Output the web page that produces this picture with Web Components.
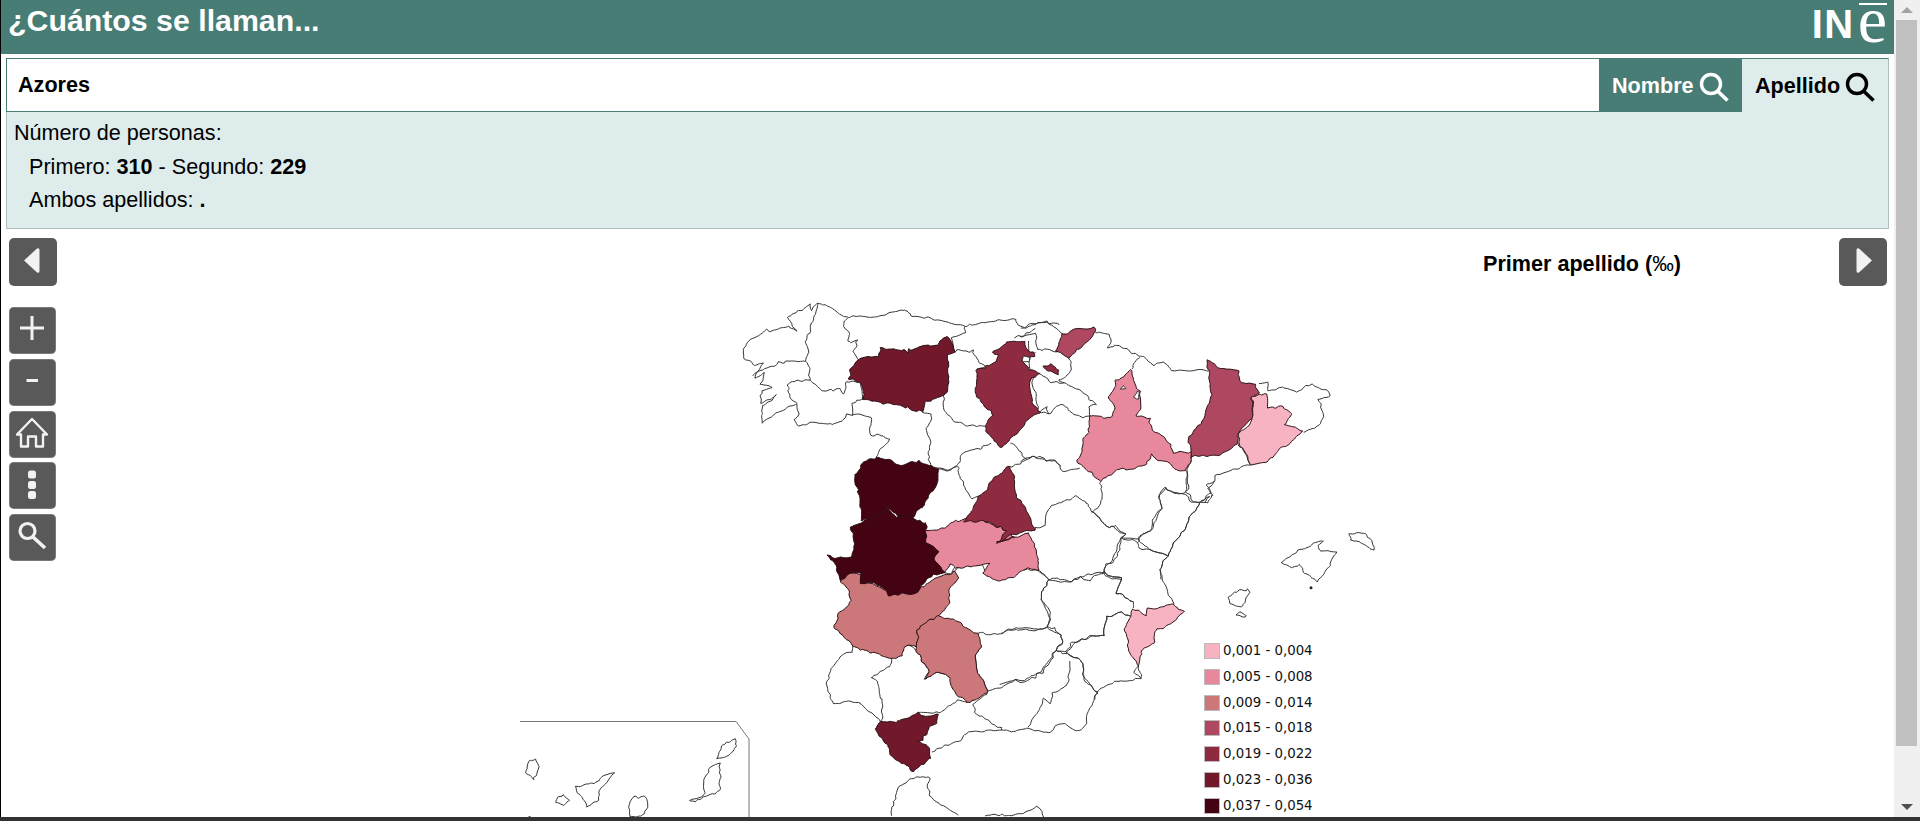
<!DOCTYPE html>
<html lang="es">
<head>
<meta charset="utf-8">
<title>¿Cuántos se llaman...</title>
<style>
  html, body { margin: 0; height: 821px; overflow: hidden; background: #fff; }
  body { font-family: "Liberation Sans", Arial, sans-serif; }
</style>
</head>
<body>
<ine-app>
  <app-header slot="top">¿Cuántos se llaman...</app-header>
  <search-panel slot="top" value="Azores" first="310" second="229" both="."></search-panel>
  <map-view slot="top"></map-view>
</ine-app>

<script>
const PATHS = {
  prev: '<path d="M15 22.5 L28 10.5 Q30.5 9.5 30.5 12 V33 Q30.5 35.5 28 34.5 Z" fill="#f2f2f2"/>',
  next: '<path d="M33 22.5 L20 10.5 Q17.5 9.5 17.5 12 V33 Q17.5 35.5 20 34.5 Z" fill="#f2f2f2"/>',
  plus: '<path d="M11 21 H35 M23 9 V33" stroke="#f2f2f2" stroke-width="3" fill="none"/>',
  minus: '<path d="M17.5 21.5 H29" stroke="#f2f2f2" stroke-width="3" fill="none"/>',
  home: '<path d="M8 23.5 L23 8 L38 23.5 H34 V35.5 H27 V25.5 H19 V35.5 H12 V23.5 Z" stroke="#f2f2f2" stroke-width="2.4" stroke-linejoin="round" fill="none"/>',
  dots: '<rect x="19" y="8.5" width="8" height="8" rx="2.5" fill="#f2f2f2"/><rect x="19" y="19" width="8" height="8" rx="2.5" fill="#f2f2f2"/><rect x="19" y="29" width="8" height="8" rx="2.5" fill="#f2f2f2"/>',
  search: '<circle cx="18.5" cy="17" r="7.5" stroke="#f2f2f2" stroke-width="3.2" fill="none"/><path d="M24 23 L36 34" stroke="#f2f2f2" stroke-width="3.6" fill="none"/>'
};

// map data, written in the pixel grid of the 3x crops of the map
const CROPS = {
  A: [720, 290], B: [1020, 300], C: [800, 540], E: [500, 700], F: [1000, 480], G: [780, 430]
};
const LINES = {
  A: [
    "130,397 128,345 165,312 125,335 125,300 150,292 122,285 135,255 105,265 130,220 105,232 75,200 72,178 88,155 135,118 145,128 205,105 225,120 210,85 268,40 275,55 295,35 330,50 360,78 430,78 495,72 550,60 575,78 620,80 680,98 735,108 800,100 835,92 885,88 895,102 930,112 955,100 1020,105",
    "130,397 165,365 225,347 238,370 225,390 235,407 280,395 320,405 365,395 378,375 392,380 420,378 450,385 458,430 490,437 505,450 470,505",
    "295,35 290,70 270,110 262,150 268,190 255,212 270,240 265,268",
    "100,260 130,240 165,225 210,220 255,212",
    "265,268 290,290 320,300 360,295 370,310 385,280 420,280 430,330 395,345 392,380",
    "205,282 235,268 265,268",
    "205,282 215,320 230,345",
    "388,80 368,110 385,130 395,160 415,150 410,170 395,185 415,205",
    "685,180 680,300 670,320 680,380 710,395 745,410 800,405",
    "735,108 735,130 695,150 705,180 720,175 760,180 780,215 795,225 775,240",
    "610,365 635,378 618,420 635,460 625,490 630,525 650,530 690,540 710,525 740,485 810,460",
    "710,530 735,590 755,625 780,620",
    "885,140 925,125 945,120",
    "875,455 890,470 915,505 870,530",
    "915,505 960,500 1000,515 1020,530",
    "655,535 680,540 710,530"
  ],
  B: [
    "0,78 50,72 80,68 130,100",
    "215,95 270,105 265,145 285,135 350,165 360,170 400,195 430,185 460,212 490,205 558,212",
    "715,250 740,250 745,275 790,262 830,275 880,255 920,265 925,285 900,300 915,350 890,385 850,400",
    "760,470 692,490 630,512 590,530 565,570 585,585 560,610 540,612 490,690 440,760 420,810 425,840",
    "0,105 45,100 55,145 105,152",
    "25,120 28,155 48,155 50,150 30,180 35,220 70,225 95,250 130,252 170,265 200,292 230,312 205,325 205,345",
    "35,220 40,230 55,335 85,340 110,322 130,318 165,345 190,355 205,345",
    "0,350 55,335 75,322 85,340",
    "150,170 150,205 130,235 118,240 130,252",
    "355,170 340,205",
    "515,478 500,515 503,570 495,575 520,605 540,612",
    "655,425 695,490",
    "500,515 495,575 470,580 440,570 415,595 425,625 405,660 385,690 350,720",
    "240,540 250,600 218,635 265,685 285,675 315,700 305,712 340,718 350,720 395,755 440,760",
    "0,480 15,470 60,475 100,480 130,515 180,505",
    "40,680 75,675 80,630 125,610 165,592 195,605 218,635",
    "300,715 255,800 250,820 300,840"
  ],
  F: [
    "600,72 540,165 500,220 480,270 495,320 520,375",
    "415,555 405,580 425,595 370,602 330,610 295,635 280,660",
    "275,95 325,145 335,140 375,160 360,175 350,230 315,250 315,275",
    "120,270 145,295 175,290 205,305 235,290 270,298 315,275",
    "360,175 400,185 410,190 425,210 460,215 495,220",
    "410,190 470,125 485,85 475,50 495,30 550,40 575,65 600,72",
    "600,72 640,40 620,20 645,0",
    "605,65 630,55 610,70",
    "315,275 360,295 350,340 395,365 395,390",
    "145,295 125,360 155,395 145,435 180,460 185,490 170,515 200,520 215,490 270,465 315,465 320,410 360,395 390,410",
    "145,435 100,455 60,450 30,455 0,455",
    "170,515 130,575 100,590 70,600 40,600 0,610",
    "200,522 245,550 250,600 295,635",
    "415,555 425,595"
  ],
  C: [
    "895,458 870,500 855,550 825,572 800,552 770,555 745,580 690,568 645,575 600,568 510,572 480,605 440,615 398,635",
    "240,545 215,515 180,495 145,487 97,492 80,430 110,365 120,350 155,340 160,315",
    "470,100 480,85 545,70 555,100 600,120 660,90 715,90 745,115 725,180 755,235 745,255",
    "745,115 800,125 870,105 915,95 960,115 950,160 995,185",
    "530,282 590,280 630,270 660,265 710,270 745,255 770,260 785,300 770,335 800,345 850,372 845,405 895,458",
    "545,320 530,350 535,400 565,450 600,440 640,420 660,425 710,415 740,370 770,335",
    "565,450 525,490 530,520 600,560 600,568",
    "810,368 800,430 760,460 750,490 730,475 705,530 690,565",
    "270,355 270,380 215,415 235,420 245,460 240,545",
    "325,318 355,330 385,400 375,415 415,400 435,405",
    "500,485 475,480 420,520 365,520",
    "270,830 300,735 365,710 390,715 380,735 395,770 470,830",
    "555,830 575,825 610,825 640,830 690,815 710,797 730,830",
    "800,345 830,300 880,285 915,285 920,230 960,215 990,230"
  ]
};
const ISLANDS = {
  F: [
    "845,247 900,205 945,185 970,180 955,195 965,215 1005,218 995,250 950,303 910,280 900,250 875,268 850,252",
    "1052,165 1095,158 1120,180 1125,205 1085,190 1055,182",
    "690,355 710,338 745,332 752,345 725,380 692,375",
    "715,408 725,395 745,410 730,413"
  ],
  E: [
    "655,172 665,140 710,110 715,130 700,155 665,175",
    "565,302 605,285 630,200 660,190 655,270 605,290 585,310",
    "397,292 440,295 445,335 420,350 385,345 380,320",
    "230,257 285,250 310,225 340,222 300,270 295,300 262,320 245,295",
    "170,295 186,282 205,298 190,316 172,308",
    "80,180 110,175 118,200 100,240 85,215",
    "80,352 88,345 96,352"
  ]
};
// painted in this order, over the plain borders
const PROVINCES = [
  ["G", "#e8889c", "438,305 500,295 530,270 600,270 680,300 700,325 650,335 745,310 780,385 778,420 750,415 655,455 610,430 622,402 600,402 560,412 530,420 510,405 498,430 465,390 470,370 438,340"],
  ["A", "#72182b", "385,270 390,240 415,205 470,200 480,175 525,175 565,190 570,180 650,165 685,140 705,180 685,190 685,240 683,300 670,318 618,330 610,365 570,350 500,345 430,330 430,300 420,280"],
  ["A", "#8f2b40", "860,155 915,150 925,180 945,178 950,195 925,200 910,210 930,240 965,252 935,265 935,330 958,365 910,400 900,420 870,450 845,470 810,445 800,405 825,375 790,350 765,295 775,240 825,215 830,195 815,185"],
  ["A", "#8f2b40", "968,228 990,222 1015,235 1010,250 985,243"],
  ["A", "#8f2b40", "870,528 890,560 890,610 925,665 940,720 880,730 830,760 860,720 800,695 730,700 765,650 780,620 810,590 820,565"],
  ["A", "#430312", "402,552 430,520 470,505 540,522 600,515 630,525 655,535 655,570 625,625 600,655 575,685 545,690 500,655 450,690 420,690 418,650 415,600"],
  ["C", "#cc7779", "120,125 135,100 150,100 180,105 185,130 240,140 270,160 330,155 385,130 440,105 470,100 475,120 450,150 450,190 430,215 350,270 355,320 320,320 300,350 265,355 225,340 160,315 110,265 120,220 150,180 150,150"],
  ["C", "#cc7779", "415,222 445,232 490,260 535,285 545,320 530,350 535,400 565,450 525,478 500,485 470,465 435,405 415,400 380,415 385,400 355,330 350,270"],
  ["G", "#430312", "137,382 210,380 228,340 210,285 270,270 320,235 350,265 385,260 440,280 438,340 470,370 465,390 498,430 440,445 410,485 330,492 300,465 240,460 240,430 205,430 180,450 165,400"],
  ["C", "#72182b", "245,542 305,548 360,520 370,530 410,525 415,550 390,560 365,605 350,605 385,625 395,650 345,695 310,670 270,640 255,610 230,570"],
  ["B", "#ad4860", "130,100 215,82 222,92 195,125 150,170 103,150"],
  ["B", "#e8889c", "335,205 340,240 350,265 360,275 360,320 350,345 385,360 400,395 440,420 460,460 515,455 515,480 495,515 465,510 395,465 380,490 330,505 290,510 240,540 165,480 180,450 205,400 205,345 270,355 280,325 270,300 285,245"],
  ["B", "#ad4860", "558,182 620,205 655,210 665,255 700,250 720,280 697,295 695,350 655,400 655,425 600,460 515,475 510,405 545,370 570,290 565,230"],
  ["B", "#f7b3c1", "700,290 745,285 745,320 790,320 810,345 790,375 850,395 775,445 760,475 695,490 660,425 660,395 690,375 697,330"],
  ["F", "#f7b3c1", "395,392 440,402 445,385 520,375 555,395 510,430 470,450 455,490 430,510 415,555 385,510 375,460"]
];
const HOLES = [
  ["A", "912,198 930,198 930,213 912,213"],
  ["B", "303,262 312,252 318,264"],
  ["B", "342,292 352,272 358,276 356,296"],
  ["G", "498,430 510,405 526,415 515,432"]
];
const LEGEND = [
  ["#f7b3c1", "0,001 - 0,004"], ["#e8889c", "0,005 - 0,008"], ["#cc7779", "0,009 - 0,014"],
  ["#ad4860", "0,015 - 0,018"], ["#8f2b40", "0,019 - 0,022"], ["#72182b", "0,023 - 0,036"],
  ["#430312", "0,037 - 0,054"]
];

// small bumps, a function of the place only, so that two shapes that share a border bump alike
const lattice = (i, j, s) => {
  const v = Math.sin(i * 127.1 + j * 311.7 + s * 74.7) * 43758.5453;
  return v - Math.floor(v) - 0.5;
};
const noise = (x, y, cell, s) => {
  const gx = x / cell, gy = y / cell;
  const i = Math.floor(gx), j = Math.floor(gy);
  const fade = t => t * t * (3 - 2 * t);
  const u = fade(gx - i), v = fade(gy - j);
  const top = lattice(i, j, s) * (1 - u) + lattice(i + 1, j, s) * u;
  const bottom = lattice(i, j + 1, s) * (1 - u) + lattice(i + 1, j + 1, s) * u;
  return top * (1 - v) + bottom * v;
};
const bump = (x, y) => [
  x + noise(x, y, 3.5, 1) * 2.6 + noise(x, y, 11, 2) * 4,
  y + noise(x, y, 3.5, 3) * 2.6 + noise(x, y, 11, 4) * 4
];
const roughen = (crop, points, closed) => {
  const [ox, oy] = CROPS[crop];
  const pts = points.split(" ").map(p => {
    const [x, y] = p.split(",").map(Number);
    return [ox + x / 3, oy + y / 3];
  });
  if (closed) pts.push(pts[0]);
  const out = [];
  pts.forEach((p, n) => {
    if (n === 0) {
      out.push(bump(p[0], p[1]));
      return;
    }
    const q = pts[n - 1];
    const steps = Math.max(1, Math.round(Math.hypot(p[0] - q[0], p[1] - q[1]) / 1.6));
    for (let k = 1; k <= steps; k++) {
      out.push(bump(q[0] + (p[0] - q[0]) * k / steps, q[1] + (p[1] - q[1]) * k / steps));
    }
  });
  return out.map(p => p[0].toFixed(1) + "," + p[1].toFixed(1)).join(" ");
};

const templateApp = document.createElement("template");
templateApp.innerHTML = `
  <style>
    :host { display: flex; width: 1920px; height: 821px; flex-direction: column; box-sizing: border-box; border-bottom: 4px solid #333; }
    .body { display: flex; flex: 1; min-height: 0; }
    .page { flex: 1; min-width: 0; display: flex; flex-direction: column; border-left: 1px solid #000; overflow: hidden; }
    page-scrollbar { flex: none; }
  </style>
  <div class="body">
    <div class="page"><slot name="top"></slot></div>
    <page-scrollbar></page-scrollbar>
  </div>
`;
class IneApp extends HTMLElement {
  constructor() {
    super();
    this.attachShadow({mode: "open"});
    this.shadowRoot.appendChild(templateApp.content.cloneNode(true));
  }
}

const templateScrollbar = document.createElement("template");
templateScrollbar.innerHTML = `
  <style>
    :host { display: flex; flex-direction: column; width: 26px; background: #f0f0f0; padding-left: 2px; padding-right: 3px; box-sizing: border-box; }
    .arrow { height: 20px; display: flex; align-items: center; justify-content: center; flex: none; }
    .thumb { height: 726px; background: #c0c0c0; flex: none; }
    .space { flex: 1; }
  </style>
  <div class="arrow"><svg width="12" height="6"><path d="M6 0 L12 6 H0 Z" fill="#a3a3a3"/></svg></div>
  <div class="thumb"></div>
  <div class="space"></div>
  <div class="arrow"><svg width="12" height="6"><path d="M0 0 H12 L6 6 Z" fill="#505050"/></svg></div>
`;
class PageScrollbar extends HTMLElement {
  constructor() {
    super();
    this.attachShadow({mode: "open"});
    this.shadowRoot.appendChild(templateScrollbar.content.cloneNode(true));
  }
}

const templateHeader = document.createElement("template");
templateHeader.innerHTML = `
  <style>
    :host { display: flex; flex: none; height: 54px; background: #477d75; color: #fff; justify-content: space-between; padding: 0 7px 0 7px; }
    .title { font: bold 30.3px/42px "Liberation Sans", Arial, sans-serif; }
    .logo { display: flex; position: relative; height: 54px; }
    .in { font: bold 40px/46px "Liberation Sans", Arial, sans-serif; padding-top: 1px; letter-spacing: 1.5px; }
    .e { font: 66px/40px "Liberation Serif", "Times New Roman", serif; margin-left: 3px; }
    .logo::after { content: ""; position: absolute; right: 0; top: 3px; width: 28px; height: 2px; background: #fff; }
  </style>
  <div class="title"><slot></slot></div>
  <div class="logo"><span class="in">IN</span><span class="e">e</span></div>
`;
class AppHeader extends HTMLElement {
  constructor() {
    super();
    this.attachShadow({mode: "open"});
    this.shadowRoot.appendChild(templateHeader.content.cloneNode(true));
  }
}

const templatePanel = document.createElement("template");
templatePanel.innerHTML = `
  <style>
    :host { display: block; flex: none; margin: 4px 5px 0 5px; font: 21.6px "Liberation Sans", Arial, sans-serif; color: #000; }
    .row { display: flex; height: 54px; box-sizing: border-box; border-top: 1px solid #477d75; border-left: 1px solid #477d75; border-right: 1px solid #aebfbd; background: #deedeb; }
    .query { flex: 1; background: #fff; font-weight: bold; padding-left: 11px; line-height: 52px; border-bottom: 1px solid #477d75; }
    .tab { display: flex; align-items: center; font-weight: bold; gap: 5px; box-sizing: border-box; }
    .tab svg { margin-top: 3px; }
    .name { width: 143px; background: #477d75; color: #fff; padding-left: 13px; }
    .surname { width: 146px; padding-left: 13px; }
    .info { height: 117px; box-sizing: border-box; background: #deedeb; border: 1px solid #aebfbd; border-top: 0; padding: 4px 7px; line-height: 33.6px; }
    .indent { padding-left: 15px; }
  </style>
  <div class="row">
    <div class="query"></div>
    <div class="tab name">Nombre <svg width="30" height="30" viewBox="0 0 30 30"><circle cx="12" cy="12" r="9.5" fill="none" stroke="#fff" stroke-width="3.4"/><path d="M18.5 19 L28.5 28.5" stroke="#fff" stroke-width="3.6"/></svg></div>
    <div class="tab surname">Apellido <svg width="30" height="30" viewBox="0 0 30 30"><circle cx="12" cy="12" r="9.5" fill="none" stroke="#000" stroke-width="3.4"/><path d="M18.5 19 L28.5 28.5" stroke="#000" stroke-width="3.6"/></svg></div>
  </div>
  <div class="info">
    <div>Número de personas:</div>
    <div class="indent">Primero: <b class="first"></b> - Segundo: <b class="second"></b></div>
    <div class="indent">Ambos apellidos: <b class="both"></b></div>
  </div>
`;
class SearchPanel extends HTMLElement {
  constructor() {
    super();
    this.attachShadow({mode: "open"});
    this.shadowRoot.appendChild(templatePanel.content.cloneNode(true));
  }

  connectedCallback() {
    this.shadowRoot.querySelector(".query").textContent = this.getAttribute("value");
    this.shadowRoot.querySelector(".first").textContent = this.getAttribute("first");
    this.shadowRoot.querySelector(".second").textContent = this.getAttribute("second");
    this.shadowRoot.querySelector(".both").textContent = this.getAttribute("both");
  }
}

const templateButton = document.createElement("template");
templateButton.innerHTML = `
  <style>
    :host { display: block; width: 47px; height: 47px; box-sizing: border-box; background: #595959; border-radius: 5px; box-shadow: 0 0 0 .5px #9a9a9a inset; }
    :host([big]) { width: 48px; height: 48px; box-shadow: none; }
    svg { display: block; }
  </style>
  <svg width="48" height="48" viewBox="0 0 48 48"></svg>
`;
class IconButton extends HTMLElement {
  constructor() {
    super();
    this.attachShadow({mode: "open"});
    this.shadowRoot.appendChild(templateButton.content.cloneNode(true));
  }

  connectedCallback() {
    this.shadowRoot.querySelector("svg").innerHTML = PATHS[this.getAttribute("icon")];
  }
}

const templateLegend = document.createElement("template");
templateLegend.innerHTML = `
  <style>
    :host { display: flex; flex-direction: column; position: absolute; left: 1203px; top: 414px; gap: 9.8px; font: 13.33px/16px "DejaVu Sans", Verdana, sans-serif; color: #111; }
    .item { display: flex; align-items: center; gap: 3px; height: 16px; }
    .swatch { width: 16px; height: 16px; box-sizing: border-box; border: 1px solid #bbb; }
  </style>
`;
class MapLegend extends HTMLElement {
  constructor() {
    super();
    this.attachShadow({mode: "open"});
    this.shadowRoot.appendChild(templateLegend.content.cloneNode(true));
  }

  connectedCallback() {
    LEGEND.forEach(([color, label]) => {
      const item = document.createElement("div");
      item.className = "item";
      item.innerHTML = `<span class="swatch" style="background:${color}"></span><span>${label}</span>`;
      this.shadowRoot.appendChild(item);
    });
  }
}

const templateMap = document.createElement("template");
templateMap.innerHTML = `
  <style>
    :host { display: block; flex: 1; min-height: 0; position: relative; overflow: hidden; }
    svg.map { position: absolute; left: -1px; top: 0; }
    .line, .island, .prov, .hole { stroke: #333; stroke-width: 1; stroke-linejoin: round; }
    .line { fill: none; }
    .frame { fill: none; stroke: #777; stroke-width: 1; }
    .island, .hole { fill: #fff; }
    .prov { stroke: #2a1015; }
    .top { display: flex; padding: 9px 7px 0 8px; }
    .title { margin-left: auto; margin-right: 158px; margin-top: 14px; font: bold 21.6px/24px "Liberation Sans", Arial, sans-serif; }
    .title span { font-weight: normal; }
    .tools { display: flex; flex-direction: column; gap: 4.8px; padding: 21px 0 0 8px; width: 47px; position: relative; }
    .top, .tools { position: relative; }
  </style>
  <svg class="map" width="1895" height="588" viewBox="0 229 1895 588">
    <g class="shapes"></g>
  </svg>
  <div class="top">
    <icon-button icon="prev" big></icon-button>
    <div class="title">Primer apellido (<span>‰</span>)</div>
    <icon-button icon="next" big></icon-button>
  </div>
  <div class="tools">
    <icon-button icon="plus"></icon-button>
    <icon-button icon="minus"></icon-button>
    <icon-button icon="home"></icon-button>
    <icon-button icon="dots"></icon-button>
    <icon-button icon="search"></icon-button>
  </div>
  <map-legend></map-legend>
`;
class MapView extends HTMLElement {
  constructor() {
    super();
    this.attachShadow({mode: "open"});
    this.shadowRoot.appendChild(templateMap.content.cloneNode(true));
  }

  connectedCallback() {
    let out = '<polyline class="frame" points="520,721.5 736,721.5 749,739 749,817"/>';
    Object.keys(LINES).forEach(crop => {
      LINES[crop].forEach(p => {
        out += `<polyline class="line" points="${roughen(crop, p, false)}"/>`;
      });
    });
    Object.keys(ISLANDS).forEach(crop => {
      ISLANDS[crop].forEach(p => {
        out += `<polygon class="island" points="${roughen(crop, p, true)}"/>`;
      });
    });
    PROVINCES.forEach(([crop, color, points]) => {
      out += `<polygon class="prov" fill="${color}" points="${roughen(crop, points, true)}"/>`;
    });
    HOLES.forEach(([crop, points]) => {
      out += `<polygon class="hole" points="${roughen(crop, points, true)}"/>`;
    });
    // the small isle south of Mallorca
    out += '<circle cx="1311" cy="587.7" r="1.5" fill="#222"/>';
    this.shadowRoot.querySelector(".shapes").innerHTML = out;
  }
}

window.customElements.define("ine-app", IneApp);
window.customElements.define("page-scrollbar", PageScrollbar);
window.customElements.define("app-header", AppHeader);
window.customElements.define("search-panel", SearchPanel);
window.customElements.define("icon-button", IconButton);
window.customElements.define("map-legend", MapLegend);
window.customElements.define("map-view", MapView);
</script>
</body>
</html>
